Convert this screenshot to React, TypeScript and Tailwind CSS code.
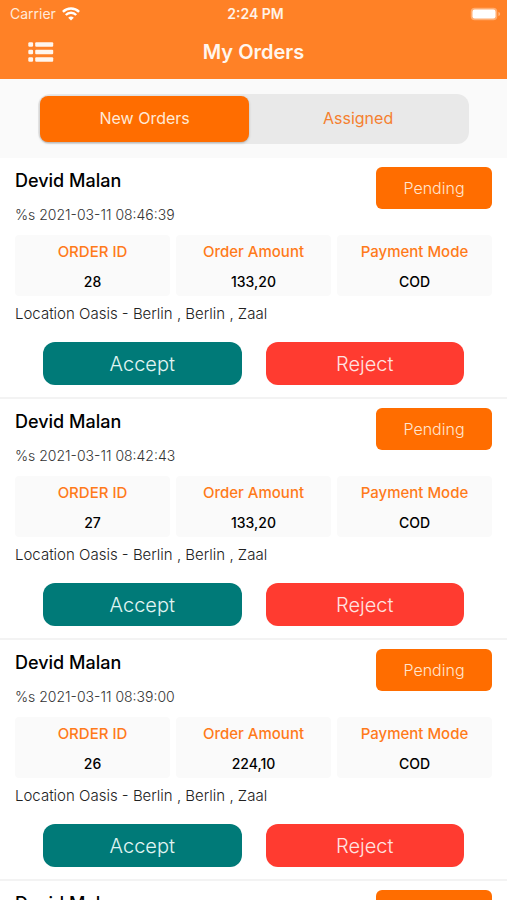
import { useState } from "react";

type Order = {
  id: string;
  customer: string;
  date: string;
  amount: string;
  payment: string;
  location: string;
  status: string;
};

const orders: Order[] = [
  {
    id: "28",
    customer: "Devid Malan",
    date: "%s 2021-03-11 08:46:39",
    amount: "133,20",
    payment: "COD",
    location: "Location Oasis - Berlin , Berlin , Zaal",
    status: "Pending",
  },
  {
    id: "27",
    customer: "Devid Malan",
    date: "%s 2021-03-11 08:42:43",
    amount: "133,20",
    payment: "COD",
    location: "Location Oasis - Berlin , Berlin , Zaal",
    status: "Pending",
  },
  {
    id: "26",
    customer: "Devid Malan",
    date: "%s 2021-03-11 08:39:00",
    amount: "224,10",
    payment: "COD",
    location: "Location Oasis - Berlin , Berlin , Zaal",
    status: "Pending",
  },
  {
    id: "25",
    customer: "Devid Malan",
    date: "%s 2021-03-11 08:35:12",
    amount: "133,20",
    payment: "COD",
    location: "Location Oasis - Berlin , Berlin , Zaal",
    status: "Pending",
  },
];

const tabs = ["New Orders", "Assigned"];

function WifiIcon() {
  return (
    <svg viewBox="0 0 18 14" className="h-3.5 w-[18px]" aria-hidden="true">
      <g fill="none" stroke="white" strokeWidth="2.4">
        <path d="M0.9 4.9a11.4 11.4 0 0 1 16.2 0" />
        <path d="M3.8 8a7.3 7.3 0 0 1 10.4 0" />
      </g>
      <path d="M9 13.6 6.2 10.8a4 4 0 0 1 5.6 0z" fill="white" />
    </svg>
  );
}

function BatteryIcon() {
  return (
    <svg viewBox="0 0 31 14" className="h-3.5 w-[31px]" aria-hidden="true">
      <rect x="0.75" y="0.75" width="26.5" height="12.5" rx="4" fill="white" fillOpacity="0.35" />
      <rect x="2.5" y="2.5" width="23" height="9" rx="2.2" fill="white" />
      <path d="M28.4 5v4c1.1-.4 1.7-1.1 1.7-2s-.6-1.6-1.7-2z" fill="white" fillOpacity="0.4" />
    </svg>
  );
}

function ListIcon() {
  return (
    <svg viewBox="0 0 26 20" className="h-5 w-[26px]" fill="#fff6ee" aria-hidden="true">
      <rect x="0.3" y="0.3" width="4.8" height="4.4" rx="1.2" />
      <rect x="7.2" y="0.3" width="18" height="4.4" rx="1" />
      <rect x="0.3" y="7.8" width="4.8" height="4.4" rx="1.2" />
      <rect x="7.2" y="7.8" width="18" height="4.4" rx="1" />
      <rect x="0.3" y="15.3" width="4.8" height="4.4" rx="1.2" />
      <rect x="7.2" y="15.3" width="18" height="4.4" rx="1" />
    </svg>
  );
}

function Detail({ label, value }: { label: string; value: string }) {
  return (
    <div className="rounded-sm bg-[#fafafa] pt-0.5 text-center font-medium">
      <dt className="text-[15px] leading-[30px] text-[#ff7a1a]">{label}</dt>
      <dd className="text-sm leading-[29px] text-black">{value}</dd>
    </div>
  );
}

function OrderCard({ order }: { order: Order }) {
  return (
    <article className="border-b-2 border-[#f3f3f3] bg-white px-[15px] pt-[9px] pb-3">
      <div className="flex items-start justify-between">
        <div>
          <h2 className="text-lg leading-7 font-medium text-black">
            {order.customer}
          </h2>
          <p className="mt-2 text-sm leading-6 font-light text-[#333]">
            {order.date}
          </p>
        </div>
        <span className="flex h-[42px] w-[116px] items-center justify-center rounded-md bg-[#ff6d00] text-base font-light text-[#ffe5cf]">
          {order.status}
        </span>
      </div>

      <dl className="mt-2 grid grid-cols-3 gap-1.5">
        <Detail label="ORDER ID" value={order.id} />
        <Detail label="Order Amount" value={order.amount} />
        <Detail label="Payment Mode" value={order.payment} />
      </dl>

      <p className="text-[15px] leading-9 font-light text-[#222]">
        {order.location}
      </p>

      <div className="mt-2.5 grid grid-cols-2 gap-6 px-7 text-xl font-light">
        <button className="h-[43px] rounded-xl bg-[#007a78] text-[#e0f5f3]">
          Accept
        </button>
        <button className="h-[43px] rounded-xl bg-[#ff3b30] text-[#ffe3e0]">
          Reject
        </button>
      </div>
    </article>
  );
}

export default function App() {
  const [active, setActive] = useState("New Orders");

  return (
    <div className="flex h-screen flex-col overflow-hidden bg-white font-['Inter',sans-serif]">
      <header className="bg-[#ff8126] pb-3 text-white">
        <div className="grid h-[27px] grid-cols-3 items-center pr-1.5 pl-2.5 text-sm">
          <div className="flex items-center gap-1.5 text-[#ffead9]">
            <span>Carrier</span>
            <WifiIcon />
          </div>
          <span className="text-center font-semibold text-[#fff3e8]">2:24 PM</span>
          <div className="flex justify-end">
            <BatteryIcon />
          </div>
        </div>
        <div className="grid h-10 grid-cols-[1fr_auto_1fr] items-end px-7">
          <button aria-label="Menu" className="flex h-[30px] w-[26px] items-center">
            <ListIcon />
          </button>
          <h1 className="text-xl leading-[30px] font-semibold text-[#fff6ee]">
            My Orders
          </h1>
        </div>
      </header>

      <div className="bg-[#fafafa] px-[38px] pt-[15px] pb-3.5">
        <div className="grid h-[50px] grid-cols-[49fr_51fr] rounded-xl bg-[#e9e9e9] p-0.5">
          {tabs.map((tab) => (
            <button
              key={tab}
              onClick={() => setActive(tab)}
              className={
                tab === active
                  ? "rounded-lg bg-[#ff6d00] pb-0.5 text-base text-[#ffe9d6] shadow-sm shadow-black/20"
                  : "rounded-lg pb-0.5 text-base text-[#f5802f]"
              }
            >
              {tab}
            </button>
          ))}
        </div>
      </div>

      <main className="min-h-0 flex-1 overflow-y-auto [scrollbar-width:none]">
        {orders.map((order) => (
          <OrderCard key={order.id} order={order} />
        ))}
      </main>
    </div>
  );
}
